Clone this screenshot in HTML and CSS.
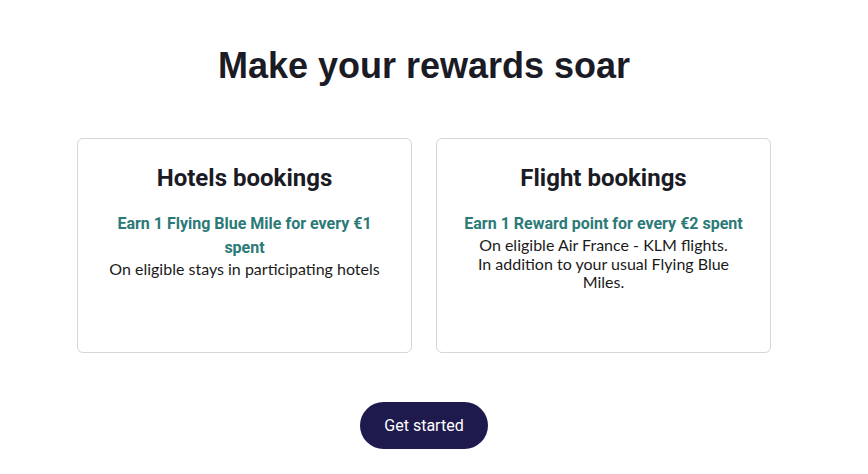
FILE: index.html
```html
<!DOCTYPE html>
<html lang="en">
<head>
<meta charset="utf-8">
<title>Make your rewards soar</title>
<link rel="stylesheet" href="styles.css">
</head>
<body>
<main class="page">
  <h1 class="title">Make your rewards soar</h1>
  <section class="cards">
    <article class="card">
      <h2 class="card-title">Hotels bookings</h2>
      <p class="card-earn">Earn 1 Flying Blue Mile for every €1 spent</p>
      <p class="card-text">On eligible stays in participating hotels</p>
    </article>
    <article class="card">
      <h2 class="card-title">Flight bookings</h2>
      <p class="card-earn">Earn 1 Reward point for every €2 spent</p>
      <p class="card-text">On eligible Air France - KLM flights.<br>In addition to your usual Flying Blue Miles.</p>
    </article>
  </section>
  <div class="actions">
    <button class="btn" type="button">Get started</button>
  </div>
</main>
</body>
</html>
```
FILE: styles.css
```css
html, body {
  margin: 0;
  padding: 0;
  background: #ffffff;
}

.page {
  padding: 44px 20px 0 0;
  display: flex;
  flex-direction: column;
  align-items: center;
}

.title {
  margin: 0;
  font-family: "Liberation Sans", Arial, sans-serif;
  font-weight: 700;
  font-size: 36px;
  line-height: 44px;
  color: #1b1b26;
  text-align: center;
}

.cards {
  margin-top: 50px;
  display: grid;
  grid-template-columns: 335px 335px;
  gap: 24px;
}

.card {
  box-sizing: border-box;
  min-height: 215px;
  border: 1px solid #d6d6d6;
  border-radius: 6px;
  padding: 25px 24px 24px;
  text-align: center;
}

.card-title {
  margin: 0 0 19px;
  font-family: Roboto, "Liberation Sans", sans-serif;
  font-weight: 700;
  font-size: 24px;
  line-height: 29px;
  color: #1b1b26;
}

.card-earn {
  margin: 0;
  font-family: Roboto, "Liberation Sans", sans-serif;
  font-weight: 700;
  font-size: 16px;
  line-height: 24px;
  color: #2c7a77;
}

.card-text {
  margin: 0;
  font-family: Lato, "Liberation Sans", sans-serif;
  font-size: 16px;
  line-height: 18.5px;
  color: #1b1b1b;
}

.actions {
  margin-top: 49px;
}

.btn {
  height: 47px;
  padding: 0 24px;
  border: none;
  border-radius: 24px;
  background: #1f1a4d;
  color: #ffffff;
  font-family: Roboto, "Liberation Sans", sans-serif;
  font-size: 16px;
  cursor: pointer;
}
```
